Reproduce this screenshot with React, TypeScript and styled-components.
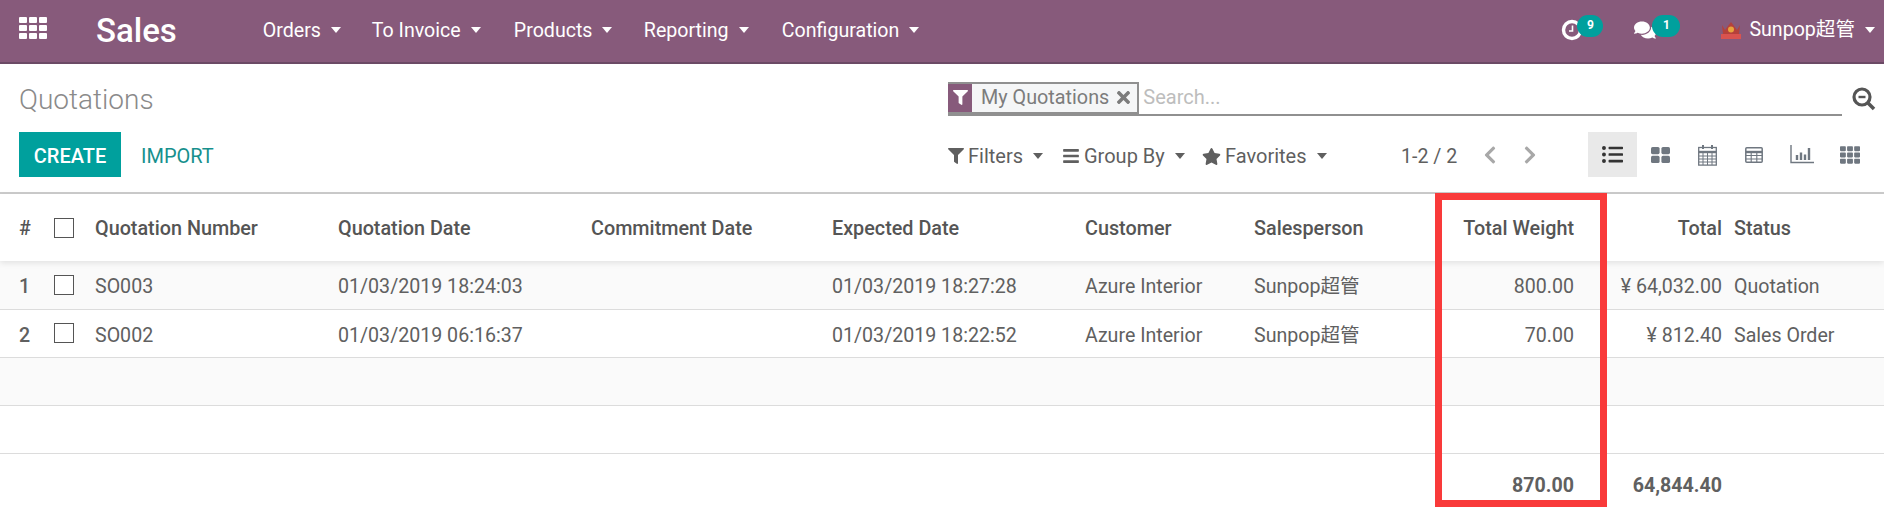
import React from "react";
import styled, { createGlobalStyle } from "styled-components";
import { FaFilter, FaBars, FaStar, FaTimes, FaChevronLeft, FaChevronRight, FaListUl, FaTh, FaComments } from "react-icons/fa";

const Global = createGlobalStyle`
  html, body { margin: 0; padding: 0; background: #fff; }
  body { font-family: Roboto, "Noto Sans CJK SC", sans-serif; color: #4c4c4c; }
  #root { width: 1884px; height: 515px; overflow: hidden; }
`;

const Page = styled.div`
  position: relative;
  width: 1884px;
  height: 515px;
  overflow: hidden;
  background: #fff;
`;

const Navbar = styled.header`
  display: flex;
  align-items: center;
  height: 60px;
  padding: 0 9px 2px 19px;
  background: #875a7b;
  border-bottom: 2px solid #6b4a65;
  color: #fff;
`;

const AppsGrid = styled.div`
  display: grid;
  grid-template-columns: repeat(3, 8px);
  grid-auto-rows: 6px;
  gap: 2px;
  margin-top: -4px;
  span { background: #fff; border-radius: 1px; }
`;

const Brand = styled.div`
  margin-left: 49px;
  margin-right: 86px;
  font-size: 33px;
  font-weight: 500;
`;

const NavItem = styled.div<{ $w: number }>`
  display: flex;
  align-items: center;
  width: ${(p) => p.$w}px;
  font-size: 19.6px;
  color: #fff;
`;

const Caret = styled.span<{ $color?: string }>`
  display: inline-block;
  margin-left: 10px;
  width: 0;
  height: 0;
  border-left: 5.5px solid transparent;
  border-right: 5.5px solid transparent;
  border-top: 6px solid ${(p) => p.$color || "#fff"};
`;

const NavRight = styled.div`
  margin-left: auto;
  display: flex;
  align-items: center;
`;

const Systray = styled.div<{ $w: number }>`
  position: relative;
  width: ${(p) => p.$w}px;
  height: 30px;
  display: flex;
  align-items: center;
`;

const Badge = styled.span<{ $left: number; $w: number }>`
  position: absolute;
  left: ${(p) => p.$left}px;
  top: 0;
  width: ${(p) => p.$w}px;
  height: 22px;
  border-radius: 11px;
  background: #00a09d;
  color: #fff;
  font-size: 12px;
  font-weight: 700;
  text-align: center;
  line-height: 20px;
`;

const UserName = styled.span`
  margin-left: 8px;
  font-size: 19.6px;
  line-height: 24px;
  color: #fff;
`;

const ControlPanel = styled.section`
  display: grid;
  grid-template-columns: 948px 1fr;
  grid-template-rows: 68px 45px;
  height: 128px;
  border-bottom: 2px solid #ccc;
`;

const Title = styled.h1`
  margin: 0;
  padding: 17px 0 0 19px;
  font-size: 28px;
  line-height: 38px;
  font-weight: 300;
  color: #8a8a8a;
`;

const SearchCell = styled.div`
  padding-top: 17px;
  display: flex;
  flex-direction: column;
`;

const SearchBar = styled.div`
  display: flex;
  align-items: center;
  width: 894px;
  height: 33px;
  border-bottom: 2px solid #909090;
  position: relative;
`;

const Facet = styled.div`
  display: flex;
  align-items: stretch;
  height: 32px;
  box-sizing: border-box;
  border: 2px solid #909090;
  border-left: none;
  background: #f5f6f7;
  color: #7c7c7c;
`;

const FacetIcon = styled.div`
  width: 24px;
  background: #875a7b;
  color: #fff;
  display: flex;
  align-items: center;
  justify-content: center;
  font-size: 15px;
`;

const FacetLabel = styled.div`
  display: flex;
  align-items: center;
  padding: 0 5px 0 9px;
  font-size: 19.8px;
`;

const FacetClose = styled.div`
  display: flex;
  align-items: center;
  padding-right: 4px;
  font-size: 19px;
  color: #7c7c7c;
`;

const SearchHint = styled.span`
  margin: -2px 0 0 4px;
  font-size: 20px;
  color: #bdbdbd;
`;

const SearchIcon = styled.svg`
  position: absolute;
  left: 904px;
  top: 6px;
`;

const Buttons = styled.div`
  display: flex;
  align-items: center;
  padding-left: 19px;
`;

const CreateButton = styled.button`
  width: 102px;
  height: 45px;
  padding: 2px 0 0;
  border: none;
  background: #00a09d;
  color: #fff;
  font-family: inherit;
  font-size: 20px;
  font-weight: 500;
`;

const ImportButton = styled.button`
  margin-left: 20px;
  padding: 2px 0 0;
  border: none;
  background: none;
  color: #17908d;
  font-family: inherit;
  font-size: 20px;
`;

const Tools = styled.div`
  display: flex;
  align-items: center;
  height: 45px;
`;

const ToolItem = styled.div<{ $w: number }>`
  display: flex;
  align-items: center;
  width: ${(p) => p.$w}px;
  padding-top: 3px;
  font-size: 20px;
  color: #5f5f5f;
  svg { flex: none; margin-right: 4px; }
`;

const Pager = styled.div`
  margin-left: 75px;
  width: 79px;
  padding-top: 3px;
  font-size: 19.6px;
  color: #5f5f5f;
`;

const PagerArrow = styled.div<{ $w: number }>`
  width: ${(p) => p.$w}px;
  display: flex;
  color: #a8a8a8;
  font-size: 20px;
`;

const ViewSwitch = styled.div`
  display: flex;
`;

const ViewButton = styled.div<{ $active?: boolean; $w: number }>`
  width: ${(p) => p.$w}px;
  height: 45px;
  display: flex;
  align-items: center;
  justify-content: center;
  background: ${(p) => (p.$active ? "#e9e9e9" : "transparent")};
  color: ${(p) => (p.$active ? "#333" : "#6f7780")};
`;

const Table = styled.table`
  width: 1884px;
  table-layout: fixed;
  border-collapse: collapse;
  font-size: 19.6px;
  line-height: 24px;
  color: #606060;
`;

const HeadRow = styled.tr`
  height: 67px;
  box-shadow: 0 2px 6px rgba(0, 0, 0, 0.1);
  position: relative;
`;

const Th = styled.th<{ $right?: boolean }>`
  padding: 2px ${(p) => (p.$right ? "12px" : "0")} 0 0;
  text-align: ${(p) => (p.$right ? "right" : "left")};
  font-size: 19.8px;
  font-weight: 500;
  color: #555;
`;

const CheckCell = styled.td`
  padding: 0;
`;

const IndexCell = styled.td`
  padding: 5px 0 0 19px;
  font-weight: 500;
`;

const IndexHead = styled.th`
  padding: 2px 0 0 19px;
  text-align: left;
  font-weight: 500;
  color: #555;
`;

const Row = styled.tr<{ $striped?: boolean }>`
  height: 48px;
  background: ${(p) => (p.$striped ? "#fafafa" : "#fff")};
  border-bottom: 1px solid #dcdcdc;
`;

const Td = styled.td<{ $right?: boolean }>`
  padding: 5px ${(p) => (p.$right ? "12px" : "0")} 0 0;
  text-align: ${(p) => (p.$right ? "right" : "left")};
  white-space: nowrap;
`;

const FootRow = styled.tr`
  height: 62px;
`;

const FootTd = styled.td`
  padding: 3px 12px 0 0;
  text-align: right;
  font-weight: 700;
  color: #606060;
`;

const Check = styled.span`
  display: block;
  width: 20px;
  height: 20px;
  box-sizing: border-box;
  border: 1px solid #555;
  background: #fff;
`;

const Highlight = styled.div`
  position: absolute;
  left: 1435px;
  top: 193px;
  width: 172px;
  height: 314px;
  box-sizing: border-box;
  border: 7px solid #f93a3a;
  pointer-events: none;
`;

const menu: [string, number][] = [["Orders", 109], ["To Invoice", 142], ["Products", 130], ["Reporting", 138], ["Configuration", 160]];
const widths = [54, 41, 243, 253, 241, 253, 169, 180, 152, 148, 150];

function Clock() {
  return (
    <svg width="22" height="22" viewBox="0 0 22 22">
      <circle cx="11" cy="11" r="8.5" fill="none" stroke="#fff" strokeWidth="3.4" />
      <path d="M11.5 6.5v5.5H8" fill="none" stroke="#fff" strokeWidth="1.6" />
    </svg>
  );
}

function Avatar() {
  return (
    <svg width="20" height="18" viewBox="0 0 20 18">
      <rect x="0" y="13" width="20" height="5" fill="#d9534f" />
      <path d="M1 4l3 5 6-8 6 8 3-5-1 9H2z" fill="#b5413b" />
      <circle cx="10" cy="8.5" r="3" fill="#e8a33d" />
    </svg>
  );
}

function KanbanIcon() {
  return (
    <svg width="19" height="16" viewBox="0 0 19 16" fill="currentColor">
      <rect x="0" y="0" width="8.6" height="7.2" rx="1.6" />
      <rect x="10.4" y="0" width="8.6" height="7.2" rx="1.6" />
      <rect x="0" y="8.8" width="8.6" height="7.2" rx="1.6" />
      <rect x="10.4" y="8.8" width="8.6" height="7.2" rx="1.6" />
    </svg>
  );
}

function CalendarIcon() {
  return (
    <svg width="19" height="22" viewBox="0 0 19 22" fill="none" stroke="currentColor">
      <rect x="0.7" y="3.5" width="17.6" height="17.6" strokeWidth="1.3" />
      <path d="M0.7 8h17.6" strokeWidth="2.4" />
      <path d="M1 12h17M1 15h17M1 18h17M5 8v13M9.5 8v13M14 8v13" strokeWidth="1" />
      <path d="M5 1v4M14 1v4" strokeWidth="2" />
    </svg>
  );
}

function PivotIcon() {
  return (
    <svg width="18" height="16" viewBox="0 0 18 16" fill="none" stroke="currentColor">
      <rect x="0.8" y="0.8" width="16.4" height="14.4" rx="1" strokeWidth="1.5" />
      <path d="M1 5h16" strokeWidth="2.4" />
      <path d="M1 8.5h16M1 12h16M6.2 5v10M11.8 5v10" strokeWidth="1.1" />
    </svg>
  );
}

function GraphIcon() {
  return (
    <svg width="24" height="19" viewBox="0 0 24 19" fill="none" stroke="currentColor" strokeWidth="1.4">
      <path d="M1 0v17.5h23" />
      <path d="M7 15v-5M11 15V7.5M15 15V9.5M19 15V3" strokeWidth="2.4" />
    </svg>
  );
}

function MagnifierIcon() {
  return (
    <SearchIcon width="24" height="24" viewBox="0 0 24 24" fill="none" stroke="#555">
      <circle cx="10" cy="10" r="8" strokeWidth="3.2" />
      <path d="M6.5 10h7" strokeWidth="2.4" />
      <path d="M16 16l6 6" strokeWidth="3.6" />
    </SearchIcon>
  );
}

export default function App() {
  return (
    <Page>
      <Global />
      <Navbar>
        <AppsGrid>{Array.from({ length: 9 }, (_, i) => <span key={i} />)}</AppsGrid>
        <Brand>Sales</Brand>
        {menu.map(([label, w]) => (
          <NavItem key={label} $w={w}>{label}<Caret /></NavItem>
        ))}
        <NavRight>
          <Systray $w={73}><Clock /><Badge $left={16} $w={26}>9</Badge></Systray>
          <Systray $w={87}><FaComments size={22} /><Badge $left={18} $w={28}>1</Badge></Systray>
          <Avatar />
          <UserName>Sunpop超管</UserName>
          <Caret />
        </NavRight>
      </Navbar>
      <ControlPanel>
        <Title>Quotations</Title>
        <SearchCell>
          <SearchBar>
            <Facet>
              <FacetIcon><FaFilter /></FacetIcon>
              <FacetLabel>My Quotations</FacetLabel>
              <FacetClose><FaTimes /></FacetClose>
            </Facet>
            <SearchHint>Search...</SearchHint>
            <MagnifierIcon />
          </SearchBar>
        </SearchCell>
        <Buttons>
          <CreateButton>CREATE</CreateButton>
          <ImportButton>IMPORT</ImportButton>
        </Buttons>
        <Tools>
          <ToolItem $w={114}><FaFilter size={16} />Filters<Caret $color="#5f5f5f" /></ToolItem>
          <ToolItem $w={140}><FaBars size={18} />Group By<Caret $color="#5f5f5f" /></ToolItem>
          <ToolItem $w={124}><FaStar size={19} />Favorites<Caret $color="#5f5f5f" /></ToolItem>
          <Pager>1-2 / 2</Pager>
          <PagerArrow $w={40}><FaChevronLeft /></PagerArrow>
          <PagerArrow $w={68}><FaChevronRight /></PagerArrow>
          <ViewSwitch>
            <ViewButton $active $w={49}><FaListUl size={21} /></ViewButton>
            <ViewButton $w={47}><KanbanIcon /></ViewButton>
            <ViewButton $w={46}><CalendarIcon /></ViewButton>
            <ViewButton $w={48}><PivotIcon /></ViewButton>
            <ViewButton $w={48}><GraphIcon /></ViewButton>
            <ViewButton $w={47}><FaTh size={20} /></ViewButton>
          </ViewSwitch>
        </Tools>
      </ControlPanel>
      <Table>
        <colgroup>{widths.map((w, i) => <col key={i} style={{ width: w }} />)}</colgroup>
        <thead>
          <HeadRow>
            <IndexHead>#</IndexHead>
            <CheckCell as="th"><Check /></CheckCell>
            <Th>Quotation Number</Th>
            <Th>Quotation Date</Th>
            <Th>Commitment Date</Th>
            <Th>Expected Date</Th>
            <Th>Customer</Th>
            <Th>Salesperson</Th>
            <Th $right>Total Weight</Th>
            <Th $right>Total</Th>
            <Th>Status</Th>
          </HeadRow>
        </thead>
        <tbody>
          <Row $striped>
            <IndexCell>1</IndexCell>
            <CheckCell><Check /></CheckCell>
            <Td>SO003</Td>
            <Td>01/03/2019 18:24:03</Td>
            <Td />
            <Td>01/03/2019 18:27:28</Td>
            <Td>Azure Interior</Td>
            <Td>Sunpop超管</Td>
            <Td $right>800.00</Td>
            <Td $right>¥ 64,032.00</Td>
            <Td>Quotation</Td>
          </Row>
          <Row>
            <IndexCell>2</IndexCell>
            <CheckCell><Check /></CheckCell>
            <Td>SO002</Td>
            <Td>01/03/2019 06:16:37</Td>
            <Td />
            <Td>01/03/2019 18:22:52</Td>
            <Td>Azure Interior</Td>
            <Td>Sunpop超管</Td>
            <Td $right>70.00</Td>
            <Td $right>¥ 812.40</Td>
            <Td>Sales Order</Td>
          </Row>
          <Row $striped><Td colSpan={11} /></Row>
          <Row><Td colSpan={11} /></Row>
        </tbody>
        <tfoot>
          <FootRow>
            <td colSpan={8} />
            <FootTd>870.00</FootTd>
            <FootTd>64,844.40</FootTd>
            <td />
          </FootRow>
        </tfoot>
      </Table>
      <Highlight />
    </Page>
  );
}
